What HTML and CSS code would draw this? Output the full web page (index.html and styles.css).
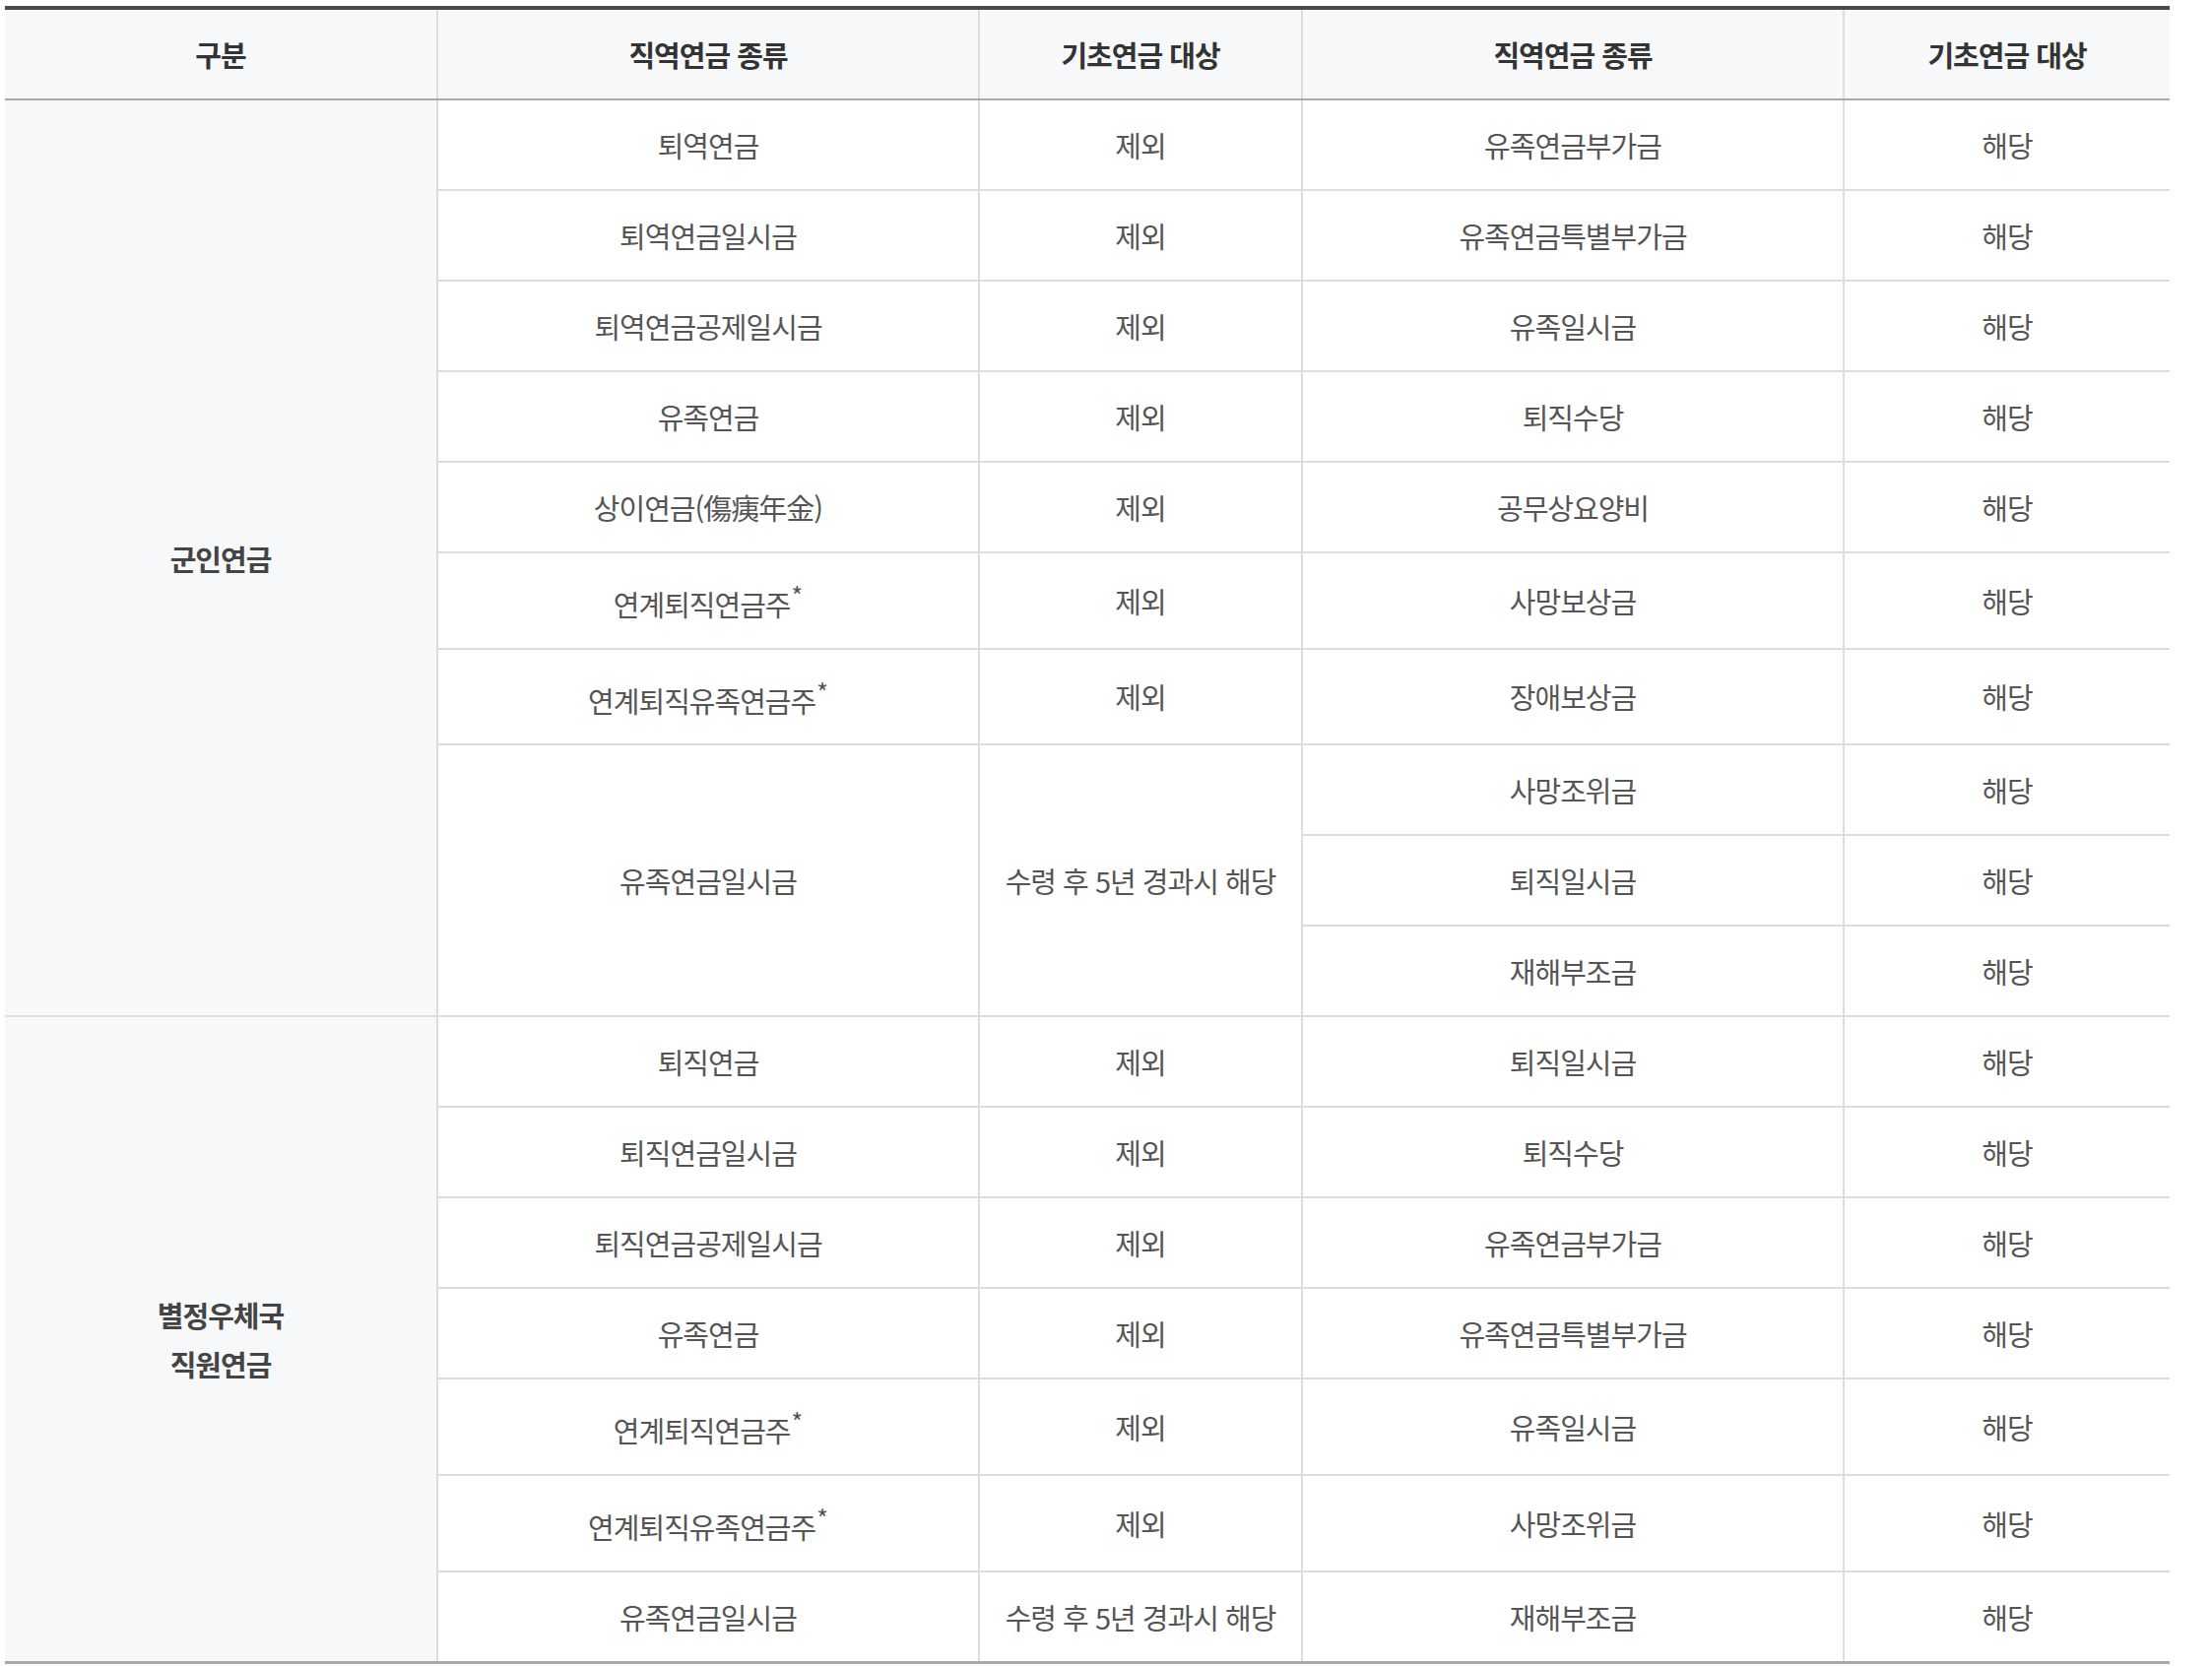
FILE: index.html
```html
<!DOCTYPE html>
<html lang="ko">
<head>
<meta charset="utf-8">
<title>직역연금 종류</title>
<link rel="stylesheet" href="styles.css">
</head>
<body>
<div class="wrap">
<table class="pension">
  <colgroup>
    <col class="c-group">
    <col class="c-kind">
    <col class="c-target">
    <col class="c-kind2">
    <col class="c-target2">
  </colgroup>
  <thead>
    <tr>
      <th>구분</th>
      <th>직역연금 종류</th>
      <th>기초연금 대상</th>
      <th>직역연금 종류</th>
      <th>기초연금 대상</th>
    </tr>
  </thead>
  <tbody>
    <tr>
      <th class="group" rowspan="10">군인연금</th>
      <td>퇴역연금</td><td>제외</td><td>유족연금부가금</td><td>해당</td>
    </tr>
    <tr><td>퇴역연금일시금</td><td>제외</td><td>유족연금특별부가금</td><td>해당</td></tr>
    <tr><td>퇴역연금공제일시금</td><td>제외</td><td>유족일시금</td><td>해당</td></tr>
    <tr><td>유족연금</td><td>제외</td><td>퇴직수당</td><td>해당</td></tr>
    <tr><td>상이연금(傷痍年金)</td><td>제외</td><td>공무상요양비</td><td>해당</td></tr>
    <tr><td>연계퇴직연금주<sup>*</sup></td><td>제외</td><td>사망보상금</td><td>해당</td></tr>
    <tr><td>연계퇴직유족연금주<sup>*</sup></td><td>제외</td><td>장애보상금</td><td>해당</td></tr>
    <tr>
      <td rowspan="3">유족연금일시금</td>
      <td rowspan="3">수령 후 5년 경과시 해당</td>
      <td>사망조위금</td><td>해당</td>
    </tr>
    <tr><td>퇴직일시금</td><td>해당</td></tr>
    <tr><td>재해부조금</td><td>해당</td></tr>
    <tr>
      <th class="group" rowspan="7">별정우체국<br>직원연금</th>
      <td>퇴직연금</td><td>제외</td><td>퇴직일시금</td><td>해당</td>
    </tr>
    <tr><td>퇴직연금일시금</td><td>제외</td><td>퇴직수당</td><td>해당</td></tr>
    <tr><td>퇴직연금공제일시금</td><td>제외</td><td>유족연금부가금</td><td>해당</td></tr>
    <tr><td>유족연금</td><td>제외</td><td>유족연금특별부가금</td><td>해당</td></tr>
    <tr><td>연계퇴직연금주<sup>*</sup></td><td>제외</td><td>유족일시금</td><td>해당</td></tr>
    <tr><td>연계퇴직유족연금주<sup>*</sup></td><td>제외</td><td>사망조위금</td><td>해당</td></tr>
    <tr><td>유족연금일시금</td><td>수령 후 5년 경과시 해당</td><td>재해부조금</td><td>해당</td></tr>
  </tbody>
</table>
</div>
</body>
</html>
```

FILE: styles.css
```css
html, body {
  margin: 0;
  padding: 0;
  background: #fff;
}

body {
  font-family: "Noto Sans CJK KR", "Noto Sans", sans-serif;
  color: #555;
}

.wrap {
  padding: 6px 43px 0 5px;
}

.pension {
  width: 2198px;
  border-collapse: collapse;
  table-layout: fixed;
  border-top: 4px solid #4a4a4a;
  border-bottom: 3px solid #a8a8a8;
}

.c-group { width: 439px; }
.c-kind { width: 550px; }
.c-target { width: 328px; }
.c-kind2 { width: 550px; }
.c-target2 { width: 331px; }

.pension th,
.pension td {
  font-size: 29px;
  line-height: 50px;
  letter-spacing: -1px;
  text-align: center;
  vertical-align: middle;
  padding: 20px 10px;
  border: 2px solid #dddddd;
}

.pension tr > :first-child {
  border-left: none;
}

.pension tr > :last-child {
  border-right: none;
}

.pension tbody tr:last-child td,
.pension tbody tr:last-child th,
.pension tbody th.group[rowspan="7"] {
  border-bottom: 3px solid #a8a8a8;
}

.pension thead th {
  background: #f7f8fa;
  color: #333;
  font-weight: 700;
  border-top: none;
  border-bottom: 2px solid #aaaaaa;
}

.pension thead th:first-child {
  border-left: none;
}

.pension tbody th.group {
  background: #f7f8fa;
  color: #444;
  font-weight: 700;
}

.pension td {
  color: #555;
  font-weight: 400;
}

.pension sup {
  font-size: 25px;
  line-height: 45px;
  letter-spacing: 0;
  margin-left: 1px;
}
```
